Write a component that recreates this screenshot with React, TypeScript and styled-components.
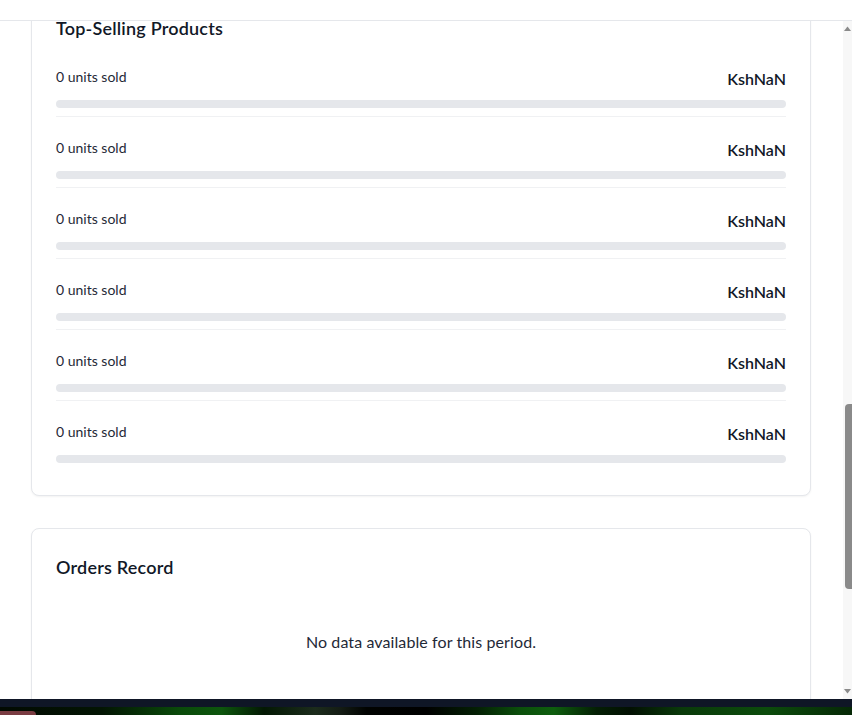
import React, { useCallback, useLayoutEffect, useRef, useState } from "react";
import styled, { createGlobalStyle } from "styled-components";

const GlobalStyle = createGlobalStyle`
  html, body {
    margin: 0;
    padding: 0;
    height: 100%;
    overflow: hidden;
    background: #ffffff;
    font-family: Lato, "Noto Sans", "Liberation Sans", sans-serif;
  }
  #root { height: 100%; }
  * { box-sizing: border-box; }
`;

const Shell = styled.div`
  display: flex;
  flex-direction: column;
  height: 100vh;
`;

const TopBar = styled.header`
  flex-shrink: 0;
  height: 21px;
  background: #ffffff;
  border-bottom: 1px solid #e5e7eb;
`;

const Viewport = styled.div`
  flex: 1;
  min-height: 0;
  display: flex;
`;

const Main = styled.main`
  flex: 1;
  min-width: 0;
  overflow-y: scroll;
  background: #ffffff;
  scrollbar-width: none;
  &::-webkit-scrollbar {
    display: none;
  }
`;

const ScrollRail = styled.div`
  width: 9px;
  flex-shrink: 0;
  display: flex;
  flex-direction: column;
  background: #f7f7f7;
`;

const RailButton = styled.div`
  height: 15px;
  flex-shrink: 0;
  display: flex;
  align-items: center;
  justify-content: flex-end;
  padding-right: 1px;
`;

const RailTrack = styled.div`
  flex: 1;
  min-height: 0;
  display: flex;
  flex-direction: column;
  align-items: flex-end;
`;

const RailThumb = styled.div`
  width: 7px;
  flex-shrink: 0;
  background: #8a8a8a;
  border-radius: 4px 0 0 4px;
`;

const Content = styled.div`
  display: flex;
  flex-direction: column;
  gap: 32px;
  padding: 24px 32px 32px 31px;
`;

const EarlierSections = styled.section`
  height: 1264px;
`;

const LaterSections = styled.section`
  height: 230px;
`;

const Card = styled.section`
  background: #ffffff;
  border: 1px solid #e5e7eb;
  border-radius: 8px;
  box-shadow: 0 1px 2px rgba(0, 0, 0, 0.05);
  padding: 24px;
`;

const CardTitle = styled.h2`
  margin: 0;
  font-size: 18px;
  line-height: 28px;
  font-weight: 600;
  letter-spacing: 0.2px;
  color: #111827;
`;

const ProductList = styled.ul`
  list-style: none;
  margin: 25px 0 0;
  padding: 0;
  display: flex;
  flex-direction: column;
  gap: 21px;
`;

const ProductRow = styled.li<{ $last: boolean }>`
  padding-bottom: 8px;
  border-bottom: ${(p) => (p.$last ? "none" : "1px solid #f0f1f3")};
`;

const RowTop = styled.div`
  display: flex;
  justify-content: space-between;
  align-items: flex-start;
`;

const ProductInfo = styled.div`
  display: flex;
  flex-direction: column;
`;

const ProductName = styled.p`
  margin: 0;
  font-size: 14px;
  font-weight: 500;
  color: #111827;
  line-height: 0;
`;

const UnitsSold = styled.p`
  margin: 0;
  font-size: 14px;
  line-height: 19px;
  color: #1f2937;
`;

const Revenue = styled.span`
  font-size: 16px;
  line-height: 24px;
  font-weight: 600;
  color: #111827;
`;

const BarTrack = styled.div`
  margin-top: 9px;
  height: 8px;
  border-radius: 9999px;
  background: #e5e7eb;
  overflow: hidden;
`;

const BarFill = styled.div`
  height: 100%;
  background: #10b981;
  border-radius: 9999px;
`;

const EmptyState = styled.p`
  margin: 0;
  padding: 49px 0 74px;
  text-align: center;
  font-size: 16px;
  line-height: 24px;
  letter-spacing: 0.1px;
  color: #1f2937;
`;

const Taskbar = styled.footer`
  flex-shrink: 0;
  display: flex;
  flex-direction: column;
`;

const NavyStrip = styled.div`
  height: 8px;
  background: #0f1626;
`;

const Wallpaper = styled.div`
  height: 8px;
  display: flex;
  align-items: flex-end;
  background: linear-gradient(
    90deg,
    #020a02 0%,
    #031503 12%,
    #0a4a0a 21%,
    #0d560d 26%,
    #031803 31%,
    #1c2c1c 37%,
    #141c14 40%,
    #010301 43%,
    #000000 50%,
    #042004 56%,
    #0b4f0b 61%,
    #0e5e0e 65%,
    #041f04 70%,
    #021002 74%,
    #0a3a0a 80%,
    #0c4c0c 90%,
    #062806 100%
  );
`;

const TrayTab = styled.div`
  width: 36px;
  height: 4px;
  background: #7a3c42;
  border-radius: 0 4px 0 0;
`;

const products = Array.from({ length: 6 }, (_, i) => ({
  id: i,
  name: "",
  units: 0,
  revenue: "KshNaN",
  share: 0,
}));

function Arrow({ up }: { up: boolean }) {
  return (
    <svg width="7" height="5" viewBox="0 0 7 5" aria-hidden>
      <path d={up ? "M0 5 L3.5 0.5 L7 5 Z" : "M0 0 L7 0 L3.5 4.5 Z"} fill="#8a8a8a" />
    </svg>
  );
}

export default function App() {
  const mainRef = useRef<HTMLElement>(null);
  const trackRef = useRef<HTMLDivElement>(null);
  const [thumb, setThumb] = useState({ top: 0, size: 40 });

  const measure = useCallback(() => {
    const el = mainRef.current;
    const track = trackRef.current;
    if (!el || !track) return;
    const trackLen = track.clientHeight;
    const size = Math.max(20, (trackLen * el.clientHeight) / el.scrollHeight);
    const maxScroll = el.scrollHeight - el.clientHeight;
    const top = maxScroll > 0 ? (el.scrollTop / maxScroll) * (trackLen - size) : 0;
    setThumb({ top, size });
  }, []);

  useLayoutEffect(() => {
    if (mainRef.current) mainRef.current.scrollTop = 1352;
    measure();
  }, [measure]);

  return (
    <>
      <GlobalStyle />
      <Shell>
        <TopBar />
        <Viewport>
          <Main ref={mainRef} onScroll={measure}>
            <Content>
              <EarlierSections aria-hidden />
              <Card>
                <CardTitle>Top-Selling Products</CardTitle>
                <ProductList>
                  {products.map((p, i) => (
                    <ProductRow key={p.id} $last={i === products.length - 1}>
                      <RowTop>
                        <ProductInfo>
                          <ProductName>{p.name}</ProductName>
                          <UnitsSold>{p.units} units sold</UnitsSold>
                        </ProductInfo>
                        <Revenue>{p.revenue}</Revenue>
                      </RowTop>
                      <BarTrack>
                        <BarFill style={{ width: `${p.share}%` }} />
                      </BarTrack>
                    </ProductRow>
                  ))}
                </ProductList>
              </Card>
              <Card>
                <CardTitle>Orders Record</CardTitle>
                <EmptyState>No data available for this period.</EmptyState>
              </Card>
              <LaterSections aria-hidden />
            </Content>
          </Main>
          <ScrollRail>
            <RailButton>
              <Arrow up />
            </RailButton>
            <RailTrack ref={trackRef}>
              <RailThumb style={{ marginTop: thumb.top, height: thumb.size }} />
            </RailTrack>
            <RailButton>
              <Arrow up={false} />
            </RailButton>
          </ScrollRail>
        </Viewport>
        <Taskbar>
          <NavyStrip />
          <Wallpaper>
            <TrayTab />
          </Wallpaper>
        </Taskbar>
      </Shell>
    </>
  );
}
